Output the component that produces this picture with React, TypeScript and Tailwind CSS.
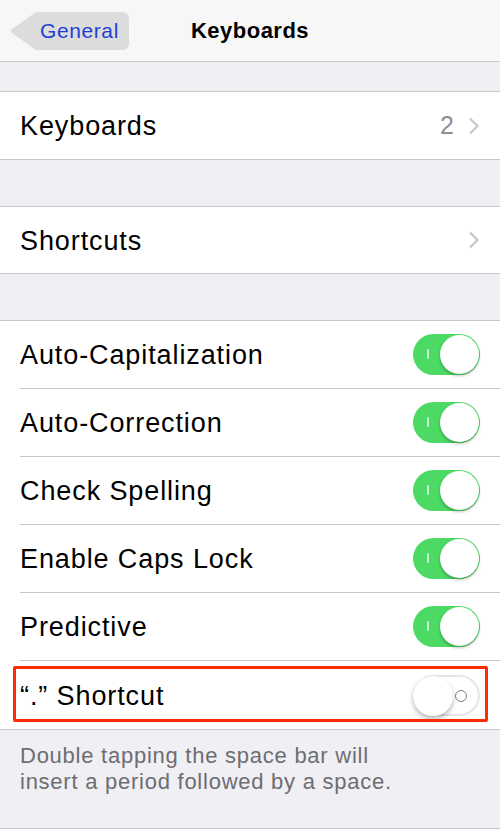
import React from "react";

const font = { fontFamily: '"Liberation Sans", Arial, sans-serif' };

function Chevron() {
  return (
    <svg width="12" height="18" viewBox="0 0 12 18" className="ml-[14px]">
      <path d="M2 1.5 L9.5 9 L2 16.5" fill="none" stroke="#c7c7cc" strokeWidth="2.2" />
    </svg>
  );
}

function Toggle({ on }: { on: boolean }) {
  if (on) {
    return (
      <div className="relative w-[67px] h-[41px] rounded-full bg-[#4cd964] shrink-0">
        <div className="absolute left-[14px] top-[15px] w-[2px] h-[10px] bg-[#c9f2d0] rounded-sm" />
        <div className="absolute right-[1px] top-[1px] w-[39px] h-[39px] rounded-full bg-white shadow-[0_2px_3px_rgba(0,0,0,0.25)]" />
      </div>
    );
  }
  return (
    <div className="relative w-[67px] h-[41px] rounded-full bg-white border-2 border-[#e5e5ea] shrink-0">
      <div className="absolute right-[11px] top-[13px] w-[12px] h-[12px] rounded-full border-[1.5px] border-[#7d7d7d]" />
      <div className="absolute left-[-2px] top-[-1px] w-[40px] h-[40px] rounded-full bg-white shadow-[0_3px_5px_rgba(0,0,0,0.28)]" />
    </div>
  );
}

const toggles: { label: string; on: boolean }[] = [
  { label: "Auto-Capitalization", on: true },
  { label: "Auto-Correction", on: true },
  { label: "Check Spelling", on: true },
  { label: "Enable Caps Lock", on: true },
  { label: "Predictive", on: true },
  { label: "\u201C.\u201D Shortcut", on: false },
];

export default function App() {
  return (
    <div className="w-[500px] h-[833px] bg-[#efeff4] overflow-hidden flex flex-col" style={font}>
      <div className="h-[62px] bg-[#f7f7f7] border-b border-[#c8c7cc] relative flex items-center justify-center shrink-0">
        <div className="absolute left-[10px] top-[12px] h-[38px] flex items-center">
          <svg width="27" height="38" viewBox="0 0 27 38" className="block">
            <path d="M27 0 L26 0 L2 17 Q0 19 2 21 L26 38 L27 38 Z" fill="#dcdcdc" />
          </svg>
          <div className="h-[38px] bg-[#dcdcdc] rounded-r-[6px] flex items-center pl-[3px] pr-[10px] text-[21px] tracking-[0.6px] text-[#1f3fd3]">
            General
          </div>
        </div>
        <div className="text-[22px] font-bold tracking-[0.5px] text-black">Keyboards</div>
      </div>

      <div className="h-[29px] shrink-0" />
      <div className="bg-white border-y border-[#c8c7cc] h-[69px] flex items-center pl-[20px] pr-[20px] shrink-0">
        <span className="flex-1 pt-[2px] text-[27px] tracking-[0.9px] text-black">Keyboards</span>
        <span className="text-[25px] text-[#8e8e93]">2</span>
        <Chevron />
      </div>

      <div className="h-[46px] shrink-0" />
      <div className="bg-white border-y border-[#c8c7cc] h-[68px] flex items-center pl-[20px] pr-[20px] shrink-0">
        <span className="flex-1 pt-[2px] text-[27px] tracking-[0.9px] text-black">Shortcuts</span>
        <Chevron />
      </div>

      <div className="h-[46px] shrink-0" />
      <div className="bg-white border-y border-[#c8c7cc] shrink-0">
        {toggles.map((t, i) => (
          <div key={t.label} className="pl-[20px] relative">
            <div
              className={
                "h-[68px] flex items-center pr-[20px] " +
                (i < toggles.length - 1 ? "border-b border-[#c8c7cc]" : "h-[67px]")
              }
            >
              <span className="flex-1 pt-[2px] text-[27px] tracking-[0.9px] text-black">{t.label}</span>
              <Toggle on={t.on} />
            </div>
            {!t.on && (
              <div className="absolute left-[13px] top-[5px] w-[475px] h-[56px] border-[3px] border-[#ff2a00] rounded-[2px] pointer-events-none" />
            )}
          </div>
        ))}
      </div>

      <div className="px-[20px] pt-[13px] text-[22px] leading-[26px] tracking-[0.75px] text-[#6d6d72] h-[99px] border-b border-[#c8c7cc] shrink-0">
        Double tapping the space bar will
        <br />
        insert a period followed by a space.
      </div>
      <div className="flex-1 bg-white" />
    </div>
  );
}
